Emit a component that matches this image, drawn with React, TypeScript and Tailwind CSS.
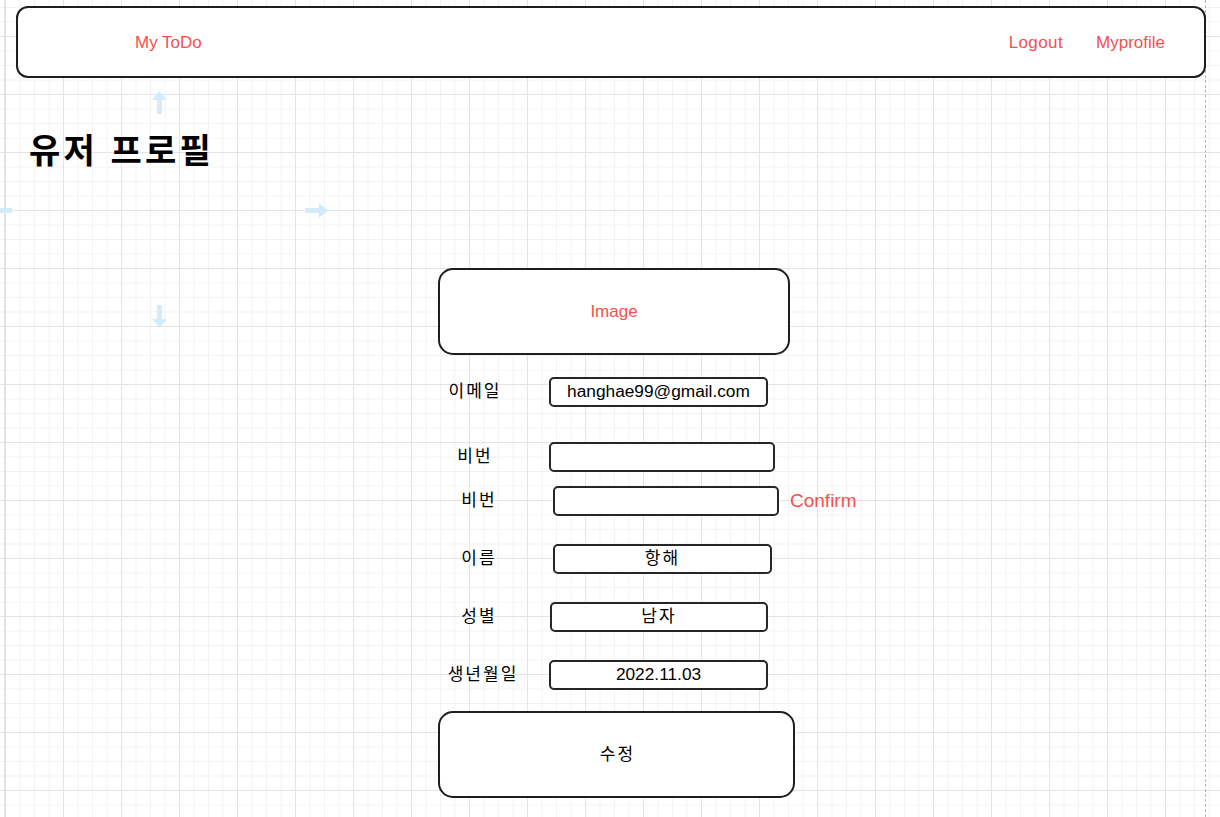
import React from 'react';

type Row = {
    label: string;
    value?: string;
    rowClass: string;
    labelClass: string;
    inputClass: string;
    confirm?: boolean;
};

const rows: Row[] = [
    { label: '이메일', value: 'hanghae99@gmail.com', rowClass: 'mt-[22px]', labelClass: 'ml-0 w-[72px]', inputClass: 'ml-[39px] w-[219px] text-[17.3px]' },
    { label: '비번', rowClass: 'mt-[35px]', labelClass: 'ml-0 w-[72px]', inputClass: 'ml-[39px] w-[226px]' },
    { label: '비번', rowClass: 'mt-[14px]', labelClass: 'ml-[4px] w-[72px]', inputClass: 'ml-[39px] w-[226px]', confirm: true },
    { label: '이름', value: '항해', rowClass: 'mt-[28px]', labelClass: 'ml-[4px] w-[72px]', inputClass: 'ml-[39px] w-[219px] tracking-[2px]' },
    { label: '성별', value: '남자', rowClass: 'mt-[28px]', labelClass: 'ml-[4px] w-[72px]', inputClass: 'ml-[36px] w-[218px] tracking-[2px]' },
    { label: '생년월일', value: '2022.11.03', rowClass: 'mt-[28px]', labelClass: 'ml-[4px] w-[80px]', inputClass: 'ml-[27px] w-[219px] text-[17.3px]' },
];

// faint blue hover arrows that draw.io leaves around a selected shape
function HoverArrow({ className, rotate }: { className: string; rotate: string }) {
    return (
        <svg className={`absolute ${className} ${rotate}`} width="15" height="23" viewBox="0 0 15 23">
            <path d="M7.5 0 L15 9 L10 9 L10 23 L5 23 L5 9 L0 9 Z" fill="#d4ebf9" />
        </svg>
    );
}

export default function App() {
    return (
        <div className="relative h-[817px] w-[1220px] overflow-hidden bg-white [font-family:'Liberation_Sans','Noto_Sans_CJK_KR',sans-serif] [background-image:linear-gradient(to_right,#e4e4e4_1px,transparent_1px),linear-gradient(to_bottom,#e4e4e4_1px,transparent_1px),linear-gradient(to_right,#f2f2f2_1px,transparent_1px),linear-gradient(to_bottom,#f2f2f2_1px,transparent_1px)] [background-size:58px_58px,58px_58px,14.5px_14.5px,14.5px_14.5px] [background-position:5px_36px]">
            {/* page boundary */}
            <div className="absolute left-[1205px] top-0 h-full border-l border-dashed border-[#b8b8b8]" />
            <div className="absolute left-[4px] top-0 h-full w-[2px] bg-[#e2e2e2]" />

            <HoverArrow className="left-[152px] top-[91px]" rotate="" />
            <HoverArrow className="left-[152px] top-[305px]" rotate="rotate-180" />
            <HoverArrow className="left-[309px] top-[199px]" rotate="rotate-90" />
            <HoverArrow className="left-[-7px] top-[199px]" rotate="-rotate-90" />

            <div className="relative flex flex-col">
                {/* Header */}
                <header className="ml-[16px] mt-[6px] flex h-[72px] w-[1190px] items-center justify-between rounded-[12px] border-2 border-[#1e1e1e] bg-white pl-[117px] pr-[39px] pt-[2px] text-[17px] text-[#f55050]">
                    <span>My ToDo</span>
                    <nav className="flex gap-[33px]">
                        <span className="tracking-[0.4px]">Logout</span>
                        <span>Myprofile</span>
                    </nav>
                </header>

                <h1 className="ml-[29px] mt-[53px] text-[34px] font-bold leading-[40px] tracking-[3.2px] text-black">유저 프로필</h1>

                {/* Profile form */}
                <div className="ml-[438px] mt-[97px] flex flex-col text-[17px] text-black">
                    <div className="flex h-[87px] w-[352px] items-center justify-center rounded-[15px] border-2 border-[#1e1e1e] bg-white text-[#f55050]">
                        Image
                    </div>

                    {rows.map((row, i) => (
                        <div key={i} className={`flex items-center ${row.rowClass}`}>
                            <span className={`shrink-0 whitespace-nowrap pl-[2px] text-center tracking-[2px] ${row.labelClass}`}>{row.label}</span>
                            <div className={`flex h-[30px] shrink-0 items-center justify-center rounded-[5px] border-2 border-[#262626] bg-white ${row.inputClass}`}>
                                {row.value}
                            </div>
                            {row.confirm && <span className="ml-[11px] text-[19px] text-[#f55050]">Confirm</span>}
                        </div>
                    ))}

                    <button className="mt-[21px] flex h-[87px] w-[357px] items-center justify-center rounded-[15px] border-2 border-[#1e1e1e] bg-white pl-[2px] tracking-[2px]">
                        수정
                    </button>
                </div>
            </div>
        </div>
    );
}
